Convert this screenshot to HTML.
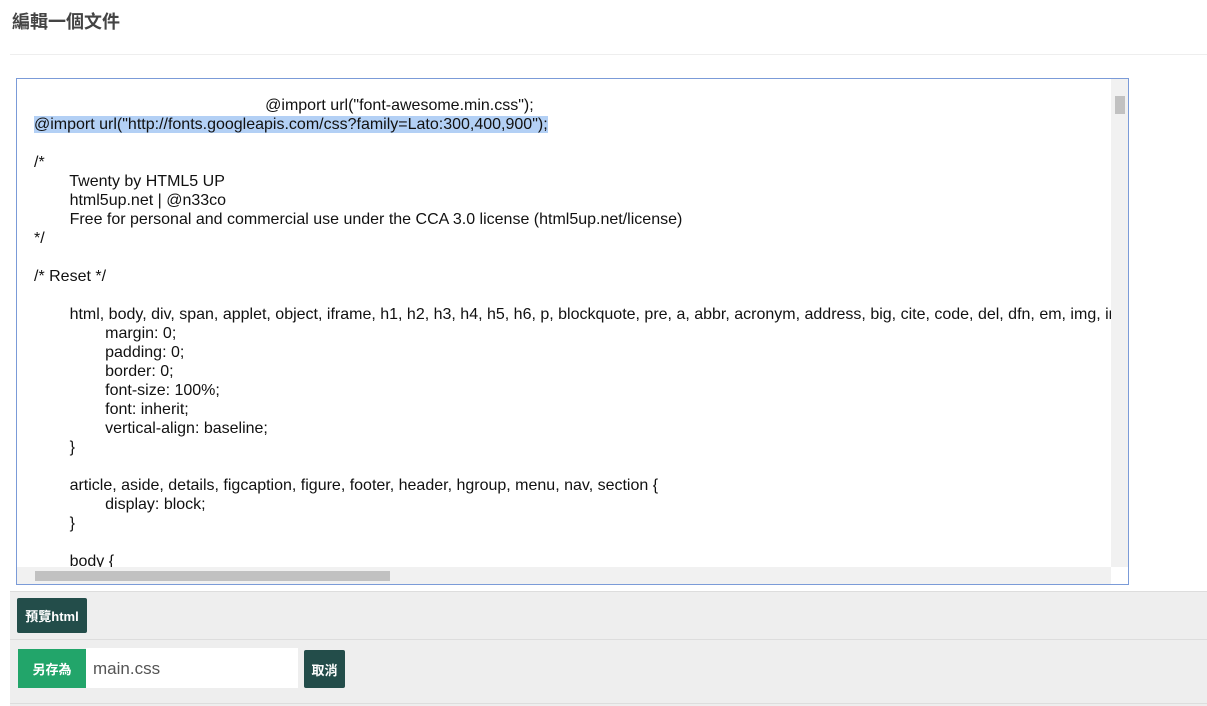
<!DOCTYPE html>
<html><head><meta charset="utf-8"><style>
body{margin:0;width:1207px;height:705px;background:#fff;font-family:"Liberation Sans","Noto Sans CJK TC",sans-serif;position:relative;overflow:hidden}
h1{position:absolute;left:12px;top:8px;margin:0;font-size:18px;font-weight:bold;color:#444}
.hr{position:absolute;left:10px;right:0;top:54px;border-top:1px solid #eee}
.ta{position:absolute;left:16px;top:78px;width:1111px;height:505px;border:1px solid #7b9bd8;background:#fff;overflow:hidden}
.txt{position:absolute;left:17px;top:17px;font-size:16px;line-height:19px;color:#111;white-space:pre;font-family:"Liberation Sans",sans-serif}
.sel{background:#b3d0f5}
.vs{position:absolute;right:0;top:0;width:17px;height:488px;background:#f1f1f1}
.vs .th{position:absolute;left:4px;top:17px;width:10px;height:18px;background:#c1c1c1}
.hs{position:absolute;left:0;bottom:0;height:17px;width:1094px;background:#f1f1f1}
.hs .th{position:absolute;left:18px;top:4px;width:355px;height:10px;background:#c1c1c1}
.grey{position:absolute;left:10px;right:0;top:591px;height:114px;background:#eee;border-top:1px solid #ddd}
.l2{position:absolute;left:10px;right:0;top:639px;border-top:1px solid #ddd}
.l3{position:absolute;left:10px;right:0;top:703px;border-top:1px solid #ddd}
.btn{position:absolute;color:#fff;font-weight:bold;font-size:13px;display:flex;align-items:center;justify-content:center;border-radius:2px}
.inp{position:absolute;left:86px;top:648px;width:212px;height:40px;background:#fff;font-size:17px;color:#555;line-height:42px;padding-left:7px;box-sizing:border-box}
</style></head><body>
<h1>編輯一個文件</h1>
<div class="hr"></div>
<div class="ta">
<div class="txt">                                                    @import url("font-awesome.min.css");
<span class="sel">@import url("http://fonts.googleapis.com/css?family=Lato:300,400,900");</span>

/*
        Twenty by HTML5 UP
        html5up.net | @n33co
        Free for personal and commercial use under the CCA 3.0 license (html5up.net/license)
*/

/* Reset */

        html, body, div, span, applet, object, iframe, h1, h2, h3, h4, h5, h6, p, blockquote, pre, a, abbr, acronym, address, big, cite, code, del, dfn, em, img, ins
                margin: 0;
                padding: 0;
                border: 0;
                font-size: 100%;
                font: inherit;
                vertical-align: baseline;
        }

        article, aside, details, figcaption, figure, footer, header, hgroup, menu, nav, section {
                display: block;
        }

        body {</div>
<div class="vs"><div class="th"></div></div>
<div class="hs"><div class="th"></div></div>
</div>
<div class="grey"></div>
<div class="l2"></div>
<div class="l3"></div>
<div class="btn" style="left:17px;top:598px;width:70px;height:35px;background:#234d4a">預覽html</div>
<div class="btn" style="left:18px;top:649px;width:68px;height:39px;background:#22a56a;border-radius:0">另存為</div>
<div class="inp">main.css</div>
<div class="btn" style="left:304px;top:650px;width:41px;height:38px;background:#234d4a">取消</div>
</body></html>
